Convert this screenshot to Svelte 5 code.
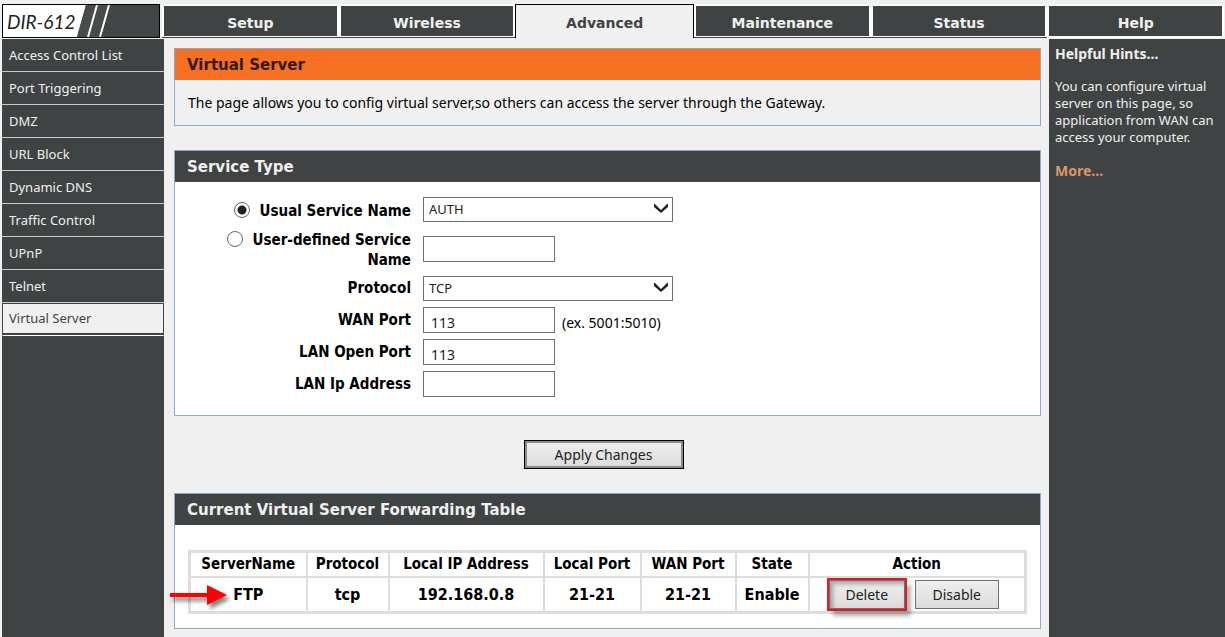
<script>
  const tabs = ['Setup', 'Wireless', 'Advanced', 'Maintenance', 'Status', 'Help']
  const menu = [
    'Access Control List',
    'Port Triggering',
    'DMZ',
    'URL Block',
    'Dynamic DNS',
    'Traffic Control',
    'UPnP',
    'Telnet',
    'Virtual Server',
  ]
  const servers = [
    { name: 'FTP', protocol: 'tcp', ip: '192.168.0.8', local: '21-21', wan: '21-21', state: 'Enable' },
  ]

  let tab = $state('Advanced')
  let page = $state('Virtual Server')
  let mode = $state('usual')
  let service = $state('AUTH')
  let customName = $state('')
  let protocol = $state('TCP')
  let wanPort = $state('113')
  let lanPort = $state('113')
  let lanIp = $state('')
</script>

{#snippet chevron()}
  <svg class="chevron" viewBox="0 0 14 10" aria-hidden="true">
    <path d="M0 0V3L7 9L14 3V0H13L7 6L1 0Z" />
  </svg>
{/snippet}

<div class="page">
  <header>
    <div class="logo">
      <svg viewBox="0 0 82 32" aria-hidden="true">
        <defs>
          <pattern id="mesh" width="4" height="4" patternUnits="userSpaceOnUse">
            <rect width="4" height="4" fill="#404343" />
            <path d="M0 0h1v1h-1zM2 2h1v1h-1z" fill="#4e5252" />
          </pattern>
        </defs>
        <path d="M9 0H82V32H0Z" fill="url(#mesh)" />
        <path d="M9 0H19L10 32H0ZM21 0H31L22 32H12Z" fill="#484b4b" />
        <path d="M20 0L11 32M32 0L23 32" stroke="#fff" stroke-width="2" />
      </svg>
      <span>DIR-612</span>
    </div>
    <nav class="tabs">
      {#each tabs as name}
        <button class:active={tab === name} class:help={name === 'Help'} onclick={() => (tab = name)}>
          <span>{name}</span>
        </button>
      {/each}
    </nav>
  </header>

  <div class="columns">
    <nav class="menu">
      {#each menu as name}
        <a href="#{name}" class:active={page === name} onclick={() => (page = name)}>{name}</a>
      {/each}
    </nav>

    <main>
      <section class="panel intro">
        <h1>Virtual Server</h1>
        <p>The page allows you to config virtual server,so others can access the server through the Gateway.</p>
      </section>

      <section class="panel">
        <h2>Service Type</h2>
        <form id="service" onsubmit={(e) => e.preventDefault()}>
          <div class="row">
            <div class="caption">
              <input type="radio" id="usual" name="mode" value="usual" bind:group={mode} />
              <label for="usual">Usual Service Name</label>
            </div>
            <div class="select">
              <select aria-label="Usual Service Name" bind:value={service}>
                <option>AUTH</option>
                <option>DNS</option>
                <option>FTP</option>
              </select>
              {@render chevron()}
            </div>
          </div>
          <div class="row">
            <div class="caption">
              <input type="radio" id="custom" name="mode" value="custom" bind:group={mode} />
              <label for="custom">User-defined Service<br />Name</label>
            </div>
            <input type="text" aria-label="User-defined Service Name" bind:value={customName} />
          </div>
          <div class="row">
            <div class="caption"><label for="protocol">Protocol</label></div>
            <div class="select">
              <select id="protocol" bind:value={protocol}>
                <option>TCP</option>
                <option>UDP</option>
              </select>
              {@render chevron()}
            </div>
          </div>
          <div class="row">
            <div class="caption"><label for="wan">WAN Port</label></div>
            <input type="text" id="wan" bind:value={wanPort} />
            <span class="note">(ex. 5001:5010)</span>
          </div>
          <div class="row">
            <div class="caption"><label for="lan">LAN Open Port</label></div>
            <input type="text" id="lan" bind:value={lanPort} />
          </div>
          <div class="row">
            <div class="caption"><label for="ip">LAN Ip Address</label></div>
            <input type="text" id="ip" bind:value={lanIp} />
          </div>
        </form>
      </section>

      <button class="button apply" type="submit" form="service">Apply Changes</button>

      <section class="panel">
        <h2>Current Virtual Server Forwarding Table</h2>
        <div class="forwarding">
          <table>
            <colgroup>
              <col class="c-name" />
              <col class="c-protocol" />
              <col class="c-ip" />
              <col class="c-local" />
              <col class="c-wan" />
              <col class="c-state" />
              <col />
            </colgroup>
            <thead>
              <tr>
                <th>ServerName</th>
                <th>Protocol</th>
                <th>Local IP Address</th>
                <th>Local Port</th>
                <th>WAN Port</th>
                <th>State</th>
                <th>Action</th>
              </tr>
            </thead>
            <tbody>
              {#each servers as server}
                <tr>
                  <td class="name">
                    <svg class="arrow" viewBox="0 0 64 32" aria-hidden="true">
                      <path d="M0 12H37V4L57 14L37 24V16H0Z" fill="#f00" />
                    </svg>
                    {server.name}
                  </td>
                  <td>{server.protocol}</td>
                  <td>{server.ip}</td>
                  <td>{server.local}</td>
                  <td>{server.wan}</td>
                  <td>{server.state}</td>
                  <td>
                    <div class="actions">
                      <span class="marked"><button class="button">Delete</button></span>
                      <button class="button">Disable</button>
                    </div>
                  </td>
                </tr>
              {/each}
            </tbody>
          </table>
        </div>
      </section>
    </main>

    <aside>
      <h3>Helpful Hints...</h3>
      <p>You can configure virtual server on this page, so application from WAN can access your computer.</p>
      <a href="#more">More...</a>
    </aside>
  </div>
</div>

<style>
  :global(body) {
    margin: 0;
    background: #f0f0f0;
  }
  * {
    box-sizing: border-box;
  }
  .page {
    display: flex;
    flex-direction: column;
    min-height: 100vh;
    padding: 4px 0 1px 2px;
    color: #000;
    font-family: 'Noto Sans', Tahoma, sans-serif;
    font-size: 14px;
  }
  h1,
  h2,
  h3,
  p {
    margin: 0;
  }
  input,
  select,
  button {
    margin: 0;
    color: #222;
    font-family: inherit;
    font-size: 14px;
  }

  header {
    display: flex;
    height: 35px;
  }
  .logo {
    position: relative;
    width: 158px;
    height: 34px;
    border: 1px solid #000;
    background: #fff;
    color: #222;
    font-family: Lato, Calibri, sans-serif;
    font-size: 19px;
    font-style: italic;
    line-height: 33px;
    padding-left: 4px;
  }
  .logo svg {
    position: absolute;
    top: 0;
    right: 0;
    width: 82px;
    height: 32px;
  }
  .tabs {
    display: flex;
    flex: 1;
    padding: 0 1px 0 2px;
  }
  .tabs button {
    flex: 1 1 0;
    height: 34px;
    padding: 2px 2px 1px;
    border: 0;
    border-bottom: 1px solid #404343;
    background: #fff;
    color: #f0f0f0;
    font-family: 'DejaVu Sans', Verdana, sans-serif;
    font-size: 14px;
    font-weight: bold;
  }
  .tabs span {
    display: flex;
    align-items: center;
    justify-content: center;
    height: 30px;
    background: #404343;
    padding-top: 3px;
  }
  .tabs .active {
    padding-top: 1px;
    border: 1px solid #000;
    border-bottom: 0;
    background: #f0f0f0;
    color: #404343;
  }
  .tabs .active span {
    background: none;
  }
  .tabs .help {
    border-bottom-color: #fff;
  }

  .columns {
    display: flex;
    flex: 1;
  }
  .menu {
    width: 162px;
    flex: none;
    background: #404343;
    font-size: 13px;
  }
  .menu a {
    display: block;
    height: 33px;
    padding-left: 7px;
    border-bottom: 1px solid #ccc;
    color: #f0f0f0;
    line-height: 32px;
    text-decoration: none;
  }
  .menu .active {
    padding-left: 6px;
    border: 1px solid #404343;
    border-bottom: 1px solid #fff;
    background: #f0f0f0;
    box-shadow: inset 0 -2px #404343;
    color: #404343;
    line-height: 28px;
  }

  main {
    display: flex;
    flex-direction: column;
    flex: 1;
    min-width: 0;
    gap: 24px;
    padding: 9px 8px 8px 10px;
  }
  .panel {
    border: 1px solid #8eacc8;
    background: #fff;
  }
  .panel h1,
  .panel h2 {
    height: 31px;
    padding-left: 12px;
    background: #404343;
    color: #f0f0f0;
    font-family: 'DejaVu Sans', Verdana, sans-serif;
    font-size: 15px;
    line-height: 32px;
  }
  .intro {
    background: #f0f0f0;
  }
  .panel h1 {
    background: #f66f23;
    color: #331a0c;
  }
  .intro p {
    padding: 13px 13px 12px;
    line-height: 20px;
  }

  form {
    display: flex;
    flex-direction: column;
    gap: 4px;
    padding: 13px 0 17px;
  }
  .row {
    display: flex;
    align-items: center;
    min-height: 28px;
  }
  .caption {
    display: flex;
    justify-content: flex-end;
    gap: 10px;
    width: 236px;
    margin-right: 12px;
    font-family: 'DejaVu Sans Condensed', Tahoma, sans-serif;
    font-size: 15px;
    font-weight: bold;
    text-align: right;
  }
  .caption label {
    line-height: 20px;
  }
  .caption input + label {
    padding-top: 3px;
  }
  input[type='radio'] {
    appearance: none;
    width: 16px;
    height: 16px;
    margin-top: 4px;
    border: 1px solid #666;
    border-radius: 50%;
    background: #fff;
  }
  input[type='radio']:checked {
    background: radial-gradient(circle, #222 4px, #fff 5px);
  }
  input[type='text'] {
    width: 132px;
    height: 26px;
    padding: 4px 7px 0;
    border: 1px solid #707070;
    border-radius: 0;
    background: #fff;
  }
  .select {
    position: relative;
    width: 250px;
    height: 25px;
  }
  .select select {
    appearance: none;
    width: 100%;
    height: 100%;
    padding: 0 5px;
    border: 1px solid #707070;
    border-radius: 0;
    background: #fff;
    font-size: 13px;
  }
  .chevron {
    position: absolute;
    top: 7px;
    right: 5px;
    width: 14px;
    height: 10px;
    fill: #222;
    pointer-events: none;
  }
  .note {
    padding: 4px 0 0 7px;
  }

  .button {
    width: 84px;
    height: 29px;
    padding: 0;
    border: 1px solid #707070;
    border-radius: 0;
    background: linear-gradient(#eee, #dcdcdc);
  }
  .apply {
    align-self: center;
    width: 160px;
    border: 1px solid #000;
    box-shadow: inset 0 0 0 2px #8a8a8a;
    margin-right: 8px;
  }

  .forwarding {
    padding: 25px 13px 14px;
  }
  table {
    width: 100%;
    border: 3px solid #ddd;
    border-collapse: collapse;
    table-layout: fixed;
    font-family: 'DejaVu Sans Condensed', Tahoma, sans-serif;
  }
  th,
  td {
    height: 25px;
    padding: 0;
    border: 2px solid #ddd;
    font-size: 15px;
    font-weight: bold;
    text-align: center;
  }
  td {
    height: 36px;
    font-size: 16px;
  }
  td .button {
    font-family: 'Noto Sans', Tahoma, sans-serif;
  }
  .c-name {
    width: 117px;
  }
  .c-protocol {
    width: 82px;
  }
  .c-ip {
    width: 155px;
  }
  .c-local {
    width: 97px;
  }
  .c-wan {
    width: 95px;
  }
  .c-state {
    width: 73px;
  }
  .name {
    position: relative;
  }
  .arrow {
    position: absolute;
    top: 3px;
    left: -21px;
    width: 64px;
    height: 32px;
    filter: drop-shadow(3px 4px 2px rgba(0, 0, 0, 0.5));
  }
  .actions {
    display: flex;
    justify-content: center;
    gap: 10px;
    padding-right: 6px;
  }
  .marked {
    outline: 2px solid #e01b22;
    box-shadow: 5px 6px 4px 1px rgba(0, 0, 0, 0.3);
  }
  .marked .button {
    display: block;
    width: 76px;
    box-shadow: inset 3px 3px 4px rgba(0, 0, 0, 0.3);
  }

  aside {
    width: 176px;
    flex: none;
    padding: 6px 4px 6px 6px;
    background: #404343;
    color: #f0f0f0;
    font-size: 13px;
    line-height: 17px;
  }
  aside h3 {
    font-size: 14px;
  }
  aside p {
    padding: 16px 0;
  }
  aside a {
    color: #d9986a;
    font-size: 14px;
    font-weight: bold;
    text-decoration: none;
  }
</style>
